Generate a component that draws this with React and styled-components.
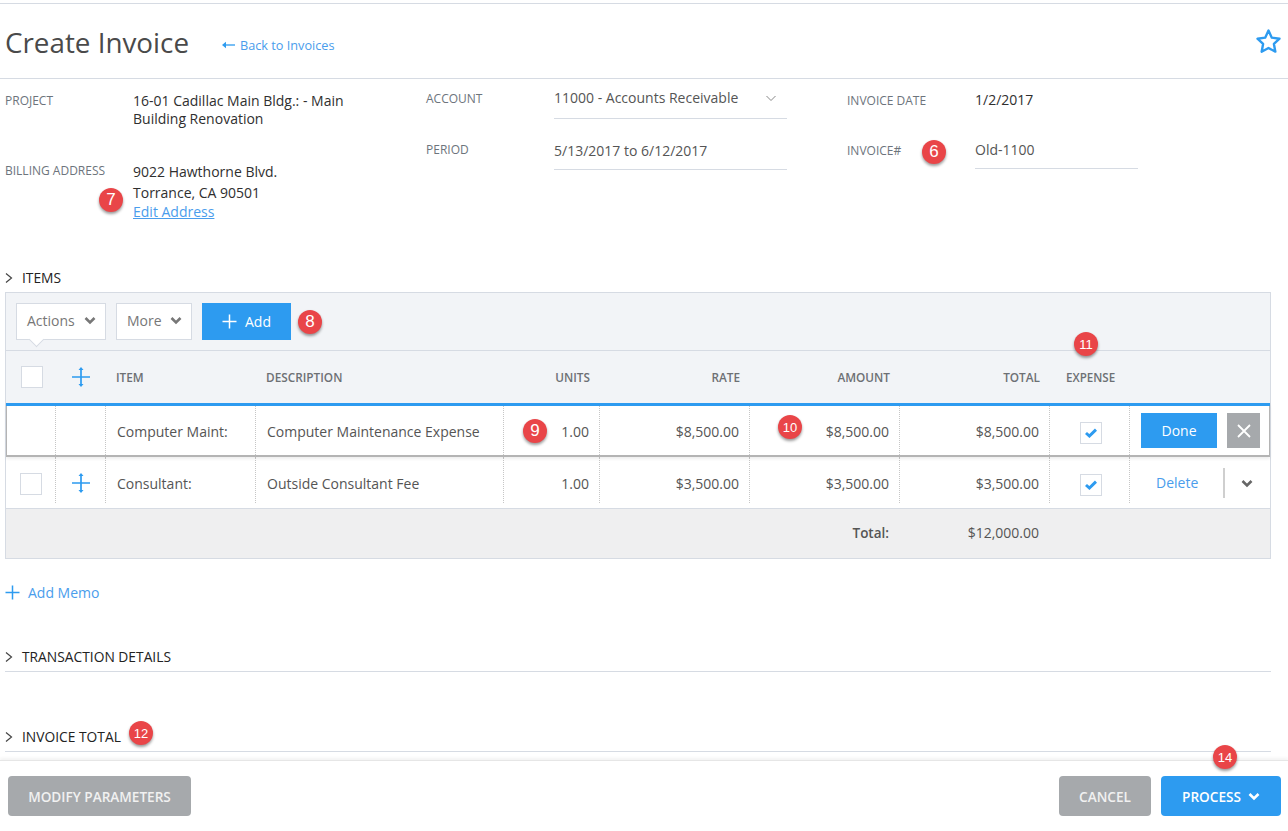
import React from "react";
import styled, { createGlobalStyle, css } from "styled-components";

const BLUE = "#2d9bf0";
const LINK = "#4a9dec";
const LINE = "#d6dbe3";
const COLUMNS = "50px 50px 150px 248px 96px 150px 150px 150px 80px 1fr";

const GlobalStyle = createGlobalStyle`
  html, body {
    margin: 0;
    padding: 0;
    background: #fff;
    font-family: "Open Sans", "Liberation Sans", sans-serif;
  }
  * { box-sizing: border-box; }
`;

const Chevron = ({ size = 12, width = 2.6, color = "currentColor" }) => (
  <svg width={size} height={size} viewBox="0 0 12 12" fill="none">
    <polyline points="1.5,4 6,8.5 10.5,4" stroke={color} strokeWidth={width} />
  </svg>
);

const RightArrow = () => (
  <svg width="8" height="10" viewBox="0 0 8 10" fill="none">
    <polyline points="1,0.5 6.5,5 1,9.5" stroke="#444" strokeWidth="1.2" />
  </svg>
);

const PlusIcon = ({ size = 15, color = BLUE }) => (
  <svg width={size} height={size} viewBox="0 0 15 15" fill="none">
    <path d="M7.5 0.5v14M0.5 7.5h14" stroke={color} strokeWidth="1.5" />
  </svg>
);

const MoveIcon = () => (
  <svg width="18" height="20" viewBox="0 0 18 20" fill="none">
    <path d="M9 2v16M0 10h18" stroke={BLUE} strokeWidth="1.7" />
    <path d="M9 0l2.5 3h-5zM9 20l-2.5-3h5z" fill={BLUE} />
  </svg>
);

const CheckMark = () => (
  <svg width="12" height="10" viewBox="0 0 12 10" fill="none">
    <polyline points="1,5 4.4,8 11,1.6" stroke={BLUE} strokeWidth="3" />
  </svg>
);

const Page = styled.div`
  position: relative;
  width: 1288px;
  height: 831px;
  overflow: hidden;
  padding-top: 3px;
  color: #444;
  font-size: 14px;
`;

const Header = styled.header`
  display: flex;
  align-items: center;
  height: 76px;
  padding: 0 6px 0 5px;
  border-top: 1px solid ${LINE};
  border-bottom: 1px solid ${LINE};
`;

const Title = styled.h1`
  margin: 2px 33px 0 0;
  font-size: 27.8px;
  font-weight: 400;
  line-height: 36px;
  color: #4a4a4a;
`;

const BackLink = styled.a`
  display: flex;
  align-items: center;
  gap: 5px;
  margin-top: 8px;
  font-size: 12.7px;
  color: ${LINK};
`;

const Star = styled.svg`
  margin-left: auto;
  width: 27px;
  height: 27px;
`;

const Form = styled.section`
  display: grid;
  grid-template-columns: 421px 421px 1fr;
  height: 190px;
  padding-left: 5px;
`;

const FormColumn = styled.div`
  display: flex;
  flex-direction: column;
  padding-top: ${(p) => p.$top ?? 0}px;
`;

const Field = styled.div`
  display: grid;
  grid-template-columns: 128px ${(p) => p.$valueWidth || "auto"};
  margin-bottom: ${(p) => p.$gap || 0}px;
`;

const Label = styled.div`
  padding-top: ${(p) => p.$top || 0}px;
  font-size: 12px;
  line-height: 18px;
  color: #6d747c;
  text-transform: uppercase;
`;

const Value = styled.div`
  font-size: 14px;
  line-height: ${(p) => p.$leading || 18}px;
  color: #2f2f2f;
`;

const Input = styled.div`
  display: flex;
  align-items: center;
  justify-content: space-between;
  height: ${(p) => p.$height || 40}px;
  padding-right: 10px;
  font-size: 14px;
  color: ${(p) => (p.$plain ? "#2f2f2f" : "#555")};
  border-bottom: 1px solid ${(p) => (p.$plain ? "transparent" : LINE)};
  ${(p) => (p.$plain ? "padding-top: 2px;" : "padding-bottom: 2px;")}
`;

const EditLink = styled.a`
  display: block;
  color: ${LINK};
  text-decoration: underline;
  line-height: 17px;
`;

const Main = styled.main`
  padding: 0 17px 0 5px;
`;

const SectionTitle = styled.div`
  display: flex;
  align-items: center;
  gap: 9px;
  height: ${(p) => (p.$ruled ? 24 : 18)}px;
  margin-top: ${(p) => p.$top || 0}px;
  padding-bottom: ${(p) => (p.$ruled ? 6 : 1)}px;
  font-size: 13.8px;
  color: #222;
  text-transform: uppercase;
  ${(p) => p.$ruled && css`border-bottom: 1px solid ${LINE};`}
`;

const Table = styled.div`
  margin-top: 5px;
  border: 1px solid ${LINE};
  background: #fff;
`;

const Toolbar = styled.div`
  display: flex;
  align-items: center;
  gap: 10px;
  height: 58px;
  padding: 0 10px 1px;
  background: #f2f4f7;
  border-bottom: 1px solid ${LINE};
`;

const MenuButton = styled.div`
  position: relative;
  display: flex;
  align-items: center;
  justify-content: space-between;
  width: ${(p) => p.$width}px;
  height: 37px;
  padding: 0 9px 2px 10px;
  background: #fff;
  border: 1px solid ${LINE};
  font-size: 14px;
  color: #777;
  ${(p) => p.$pointer && css`
    &::after {
      content: "";
      position: absolute;
      left: 14px;
      bottom: -6px;
      width: 10px;
      height: 10px;
      background: #fff;
      border-right: 1px solid ${LINE};
      border-bottom: 1px solid ${LINE};
      transform: rotate(45deg);
    }
  `}
`;

const AddButton = styled.div`
  display: flex;
  align-items: center;
  justify-content: center;
  gap: 8px;
  width: 89px;
  height: 37px;
  padding-top: 1px;
  background: ${BLUE};
  color: #fff;
  font-size: 14px;
`;

const HeadRow = styled.div`
  display: grid;
  grid-template-columns: ${COLUMNS};
  align-items: center;
  height: 52px;
  background: #f2f4f7;
`;

const HeadCell = styled.div`
  padding: 0 10px;
  font-size: 11.8px;
  font-weight: 600;
  color: #6d7074;
  text-transform: uppercase;
  text-align: ${(p) => (p.$right ? "right" : "left")};
`;

const ExpenseHead = styled(HeadCell)`
  padding: 0 0 0 16px;
  font-size: 11.6px;
`;

const Row = styled.div`
  display: grid;
  grid-template-columns: ${COLUMNS};
  ${(p) => p.$editing
    ? css`
        position: relative;
        height: 54px;
        border-top: 3px solid ${BLUE};
        border-bottom: 2px solid #b4b4b4;
        box-shadow: inset 1px 0 #b4b4b4, inset -1px 0 #b4b4b4, 0 2px 3px rgba(0, 0, 0, 0.07);
        > div { padding-top: 1px; }
      `
    : css`
        height: 52px;
        padding-bottom: 5px;
        border-bottom: 1px solid ${LINE};
        > div { padding-top: 6px; }
      `}
`;

const Cell = styled.div`
  display: flex;
  align-items: center;
  justify-content: ${(p) => p.$justify || "flex-start"};
  padding-left: ${(p) => p.$left ?? 11}px;
  padding-right: ${(p) => p.$right ?? 10}px;
  font-size: 14px;
  color: #555;
  white-space: nowrap;
  &:not(:last-child) {
    border-right: 1px dotted #c6c6c6;
  }
`;

const Box = styled.div`
  display: flex;
  align-items: center;
  justify-content: center;
  width: 22px;
  height: 22px;
  background: #fff;
  border: 1px solid ${LINE};
`;

const ExpenseBox = styled(Box)`
  margin: 3px 0 0 2px;
`;

const SelectBox = styled(Box)`
  margin-top: 1px;
`;

const BoxSlot = styled.div`
  display: flex;
  justify-content: center;
  align-items: center;
  padding-left: ${(p) => p.$left || 0}px;
`;

const DoneButton = styled.div`
  display: flex;
  align-items: center;
  justify-content: center;
  width: 76px;
  height: 35px;
  margin-top: -1px;
  background: ${BLUE};
  color: #fff;
  font-size: 14px;
`;

const CloseButton = styled.div`
  display: flex;
  align-items: center;
  justify-content: center;
  width: 33px;
  height: 35px;
  margin: -1px 0 0 10px;
  background: #a6a9ac;
`;

const DeleteLink = styled.a`
  width: 93px;
  margin-bottom: 2px;
  padding-left: 26px;
  font-size: 14px;
  color: ${LINK};
`;

const RowMenu = styled.div`
  display: flex;
  align-items: center;
  height: 30px;
  padding-left: 16px;
  border-left: 2px solid #cfcfcf;
  color: #666;
`;

const TotalRow = styled.div`
  display: grid;
  grid-template-columns: 1fr 140px 231px;
  align-items: center;
  height: 49px;
  padding-bottom: 2px;
  background: #efeff0;
  font-size: 14px;
`;

const TotalLabel = styled.div`
  text-align: right;
  padding-right: 10px;
  font-size: 13.5px;
  font-weight: 600;
  color: #555;
`;

const TotalValue = styled.div`
  text-align: right;
  color: #555;
`;

const AddMemo = styled.a`
  display: flex;
  align-items: center;
  gap: 8px;
  height: 18px;
  margin-top: 24px;
  font-size: 14px;
  color: ${LINK};
`;

const Footer = styled.footer`
  display: flex;
  align-items: flex-start;
  gap: 10px;
  height: 71px;
  margin-top: 8px;
  padding: 15px 7px 0 8px;
  border-top: 1px solid #e6e6e6;
  box-shadow: 0 -2px 3px rgba(0, 0, 0, 0.05);
`;

const FooterButton = styled.div`
  display: flex;
  align-items: center;
  justify-content: center;
  gap: 7px;
  width: ${(p) => p.$width}px;
  height: 40px;
  border-radius: 4px;
  background: ${(p) => (p.$primary ? BLUE : "#a6a9ac")};
  color: ${(p) => (p.$primary ? "#fff" : "#f1f1f1")};
  font-size: 13.6px;
  font-weight: 600;
  text-transform: uppercase;
  ${(p) => p.$end && css`margin-left: auto;`}
`;

const Badge = styled.div`
  position: absolute;
  left: ${(p) => p.$x - 12}px;
  top: ${(p) => p.$y - 12}px;
  display: flex;
  align-items: center;
  justify-content: center;
  width: 24px;
  height: 24px;
  border-radius: 50%;
  background: #e94548;
  box-shadow: 0 2px 3px rgba(0, 0, 0, 0.4);
  color: #fff;
  font-family: "Liberation Sans", Arial, sans-serif;
  font-size: ${(p) => (p.$small ? 13 : 17)}px;
  z-index: 3;
`;

const badges = [
  { n: 6, x: 934, y: 152 },
  { n: 7, x: 111, y: 200 },
  { n: 8, x: 310, y: 322 },
  { n: 9, x: 535, y: 431 },
  { n: 10, x: 790, y: 427, small: true },
  { n: 11, x: 1086, y: 344, small: true },
  { n: 12, x: 141, y: 733, small: true },
  { n: 14, x: 1225, y: 757, small: true },
];

const rows = [
  { item: "Computer Maint:", desc: "Computer Maintenance Expense", rate: "$8,500.00", editing: true },
  { item: "Consultant:", desc: "Outside Consultant Fee", rate: "$3,500.00" },
];

const App = () => {
  return (
    <Page>
      <GlobalStyle />
      <Header>
        <Title>Create Invoice</Title>
        <BackLink>
          <svg width="13" height="8" viewBox="0 0 13 8" fill="none">
            <path d="M13 4H2" stroke={BLUE} strokeWidth="1.3" />
            <path d="M0 4l4-3.2v6.4z" fill={BLUE} />
          </svg>
          Back to Invoices
        </BackLink>
        <Star viewBox="0 0 26 26" fill="none">
          <path
            d="M13 2.5l3.2 6.8 7.4 1-5.4 5.1 1.4 7.4-6.6-3.6-6.6 3.6 1.4-7.4-5.4-5.1 7.4-1z"
            stroke={BLUE}
            strokeWidth="2.3"
            strokeLinejoin="round"
          />
        </Star>
      </Header>

      <Form>
        <FormColumn $top={13}>
          <Field $gap={33}>
            <Label>Project</Label>
            <Value>16-01 Cadillac Main Bldg.: - Main<br />Building Renovation</Value>
          </Field>
          <Field>
            <Label $top={1}>Billing Address</Label>
            <Value $leading={21}>
              9022 Hawthorne Blvd.<br />Torrance, CA 90501
              <EditLink>Edit Address</EditLink>
            </Value>
          </Field>
        </FormColumn>
        <FormColumn>
          <Field $gap={14} $valueWidth="233px">
            <Label $top={11}>Account</Label>
            <Input>
              11000 - Accounts Receivable
              <Chevron size={12} width={1} color="#888" />
            </Input>
          </Field>
          <Field $valueWidth="233px">
            <Label $top={8}>Period</Label>
            <Input $height={37}>5/13/2017 to 6/12/2017</Input>
          </Field>
        </FormColumn>
        <FormColumn>
          <Field $gap={13} $valueWidth="163px">
            <Label $top={13}>Invoice Date</Label>
            <Input $plain>1/2/2017</Input>
          </Field>
          <Field $valueWidth="163px">
            <Label $top={10}>Invoice#</Label>
            <Input $height={37}>Old-1100</Input>
          </Field>
        </FormColumn>
      </Form>

      <Main>
        <SectionTitle>
          <RightArrow />
          Items
        </SectionTitle>
        <Table>
          <Toolbar>
            <MenuButton $width={90} $pointer>
              Actions
              <Chevron />
            </MenuButton>
            <MenuButton $width={76}>
              More
              <Chevron />
            </MenuButton>
            <AddButton>
              <PlusIcon color="#fff" />
              Add
            </AddButton>
          </Toolbar>

          <HeadRow>
            <BoxSlot $left={1}><Box /></BoxSlot>
            <BoxSlot><MoveIcon /></BoxSlot>
            <HeadCell>Item</HeadCell>
            <HeadCell>Description</HeadCell>
            <HeadCell $right>Units</HeadCell>
            <HeadCell $right>Rate</HeadCell>
            <HeadCell $right>Amount</HeadCell>
            <HeadCell $right>Total</HeadCell>
            <ExpenseHead>Expense</ExpenseHead>
            <div />
          </HeadRow>

          {rows.map((r) => (
            <Row key={r.item} $editing={r.editing}>
              <Cell $justify="center" $left={0} $right={0}>{!r.editing && <SelectBox />}</Cell>
              <Cell $justify="center" $left={0} $right={0}>{!r.editing && <MoveIcon />}</Cell>
              <Cell>{r.item}</Cell>
              <Cell>{r.desc}</Cell>
              <Cell $justify="flex-end">1.00</Cell>
              <Cell $justify="flex-end">{r.rate}</Cell>
              <Cell $justify="flex-end">{r.rate}</Cell>
              <Cell $justify="flex-end">{r.rate}</Cell>
              <Cell $justify="center" $left={0} $right={0}>
                <ExpenseBox><CheckMark /></ExpenseBox>
              </Cell>
              <Cell $left={r.editing ? 11 : 0} $right={0}>
                {r.editing ? (
                  <>
                    <DoneButton>Done</DoneButton>
                    <CloseButton>
                      <svg width="14" height="14" viewBox="0 0 14 14" fill="none">
                        <path d="M1 1l12 12M13 1L1 13" stroke="#fff" strokeWidth="1.8" />
                      </svg>
                    </CloseButton>
                  </>
                ) : (
                  <>
                    <DeleteLink>Delete</DeleteLink>
                    <RowMenu><Chevron /></RowMenu>
                  </>
                )}
              </Cell>
            </Row>
          ))}

          <TotalRow>
            <TotalLabel>Total:</TotalLabel>
            <TotalValue>$12,000.00</TotalValue>
            <div />
          </TotalRow>
        </Table>

        <AddMemo>
          <PlusIcon />
          Add Memo
        </AddMemo>

        <SectionTitle $ruled $top={47}>
          <RightArrow />
          Transaction Details
        </SectionTitle>
        <SectionTitle $ruled $top={56}>
          <RightArrow />
          Invoice Total
        </SectionTitle>
      </Main>

      <Footer>
        <FooterButton $width={183}>Modify Parameters</FooterButton>
        <FooterButton $width={92} $end>Cancel</FooterButton>
        <FooterButton $width={120} $primary>
          Process
          <Chevron />
        </FooterButton>
      </Footer>

      {badges.map((b) => (
        <Badge key={b.n} $x={b.x} $y={b.y} $small={b.small}>{b.n}</Badge>
      ))}
    </Page>
  );
};

export default App;
